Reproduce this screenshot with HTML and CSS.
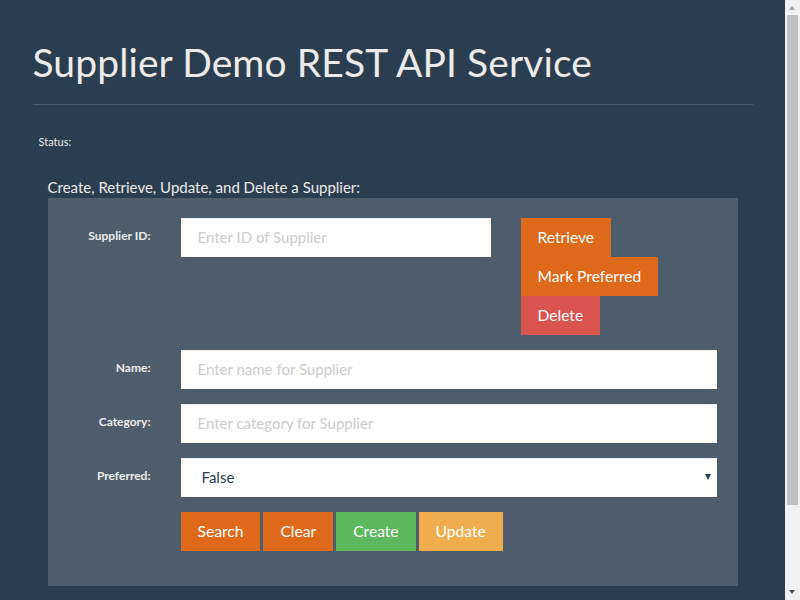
FILE: index.html
```html
<!DOCTYPE html>
<html lang="en">
<head>
<meta charset="utf-8">
<title>Supplier Demo REST API Service</title>
<link rel="stylesheet" href="styles.css">
</head>
<body>
<div class="container">
  <div class="page-header">
    <h1>Supplier Demo REST API Service</h1>
  </div>

  <div class="status">Status:</div>

  <section class="crud">
    <h3 class="crud-title">Create, Retrieve, Update, and Delete a Supplier:</h3>
    <div class="well">
      <div class="form-row form-row-top">
        <label class="control-label" for="supplier_id">Supplier ID:</label>
        <div class="id-group">
          <input class="form-control id-input" id="supplier_id" type="text" placeholder="Enter ID of Supplier">
          <div class="side-buttons">
            <button class="btn btn-primary">Retrieve</button>
            <button class="btn btn-primary">Mark Preferred</button>
            <button class="btn btn-danger">Delete</button>
          </div>
        </div>
      </div>

      <div class="form-row">
        <label class="control-label" for="supplier_name">Name:</label>
        <input class="form-control" id="supplier_name" type="text" placeholder="Enter name for Supplier">
      </div>

      <div class="form-row">
        <label class="control-label" for="supplier_category">Category:</label>
        <input class="form-control" id="supplier_category" type="text" placeholder="Enter category for Supplier">
      </div>

      <div class="form-row">
        <label class="control-label" for="supplier_preferred">Preferred:</label>
        <div class="select-wrap">
          <select class="form-control select" id="supplier_preferred">
            <option value="false" selected>False</option>
            <option value="true">True</option>
          </select>
        </div>
      </div>

      <div class="form-row form-row-actions">
        <span></span>
        <div class="actions">
          <button class="btn btn-primary">Search</button>
          <button class="btn btn-primary">Clear</button>
          <button class="btn btn-success">Create</button>
          <button class="btn btn-warning">Update</button>
        </div>
      </div>
    </div>
  </section>
</div>

<div class="scrollbar" aria-hidden="true">
  <span class="sb-arrow sb-up"></span>
  <span class="sb-thumb"></span>
  <span class="sb-arrow sb-down"></span>
</div>
</body>
</html>
```

FILE: styles.css
```css
html, body {
  margin: 0;
  padding: 0;
}

body {
  background: #2b3e50;
  color: #ebebeb;
  font-family: Lato, "Open Sans", "Liberation Sans", sans-serif;
  font-size: 15px;
  line-height: 1.42857;
  padding-right: 15px;
}

.container {
  width: 720px;
  margin: 0 auto;
  padding: 0 15px 112px;
}

.page-header {
  margin: 40px 0 20px;
  padding-bottom: 10px;
  border-bottom: 1px solid #4e5d6c;
}

.page-header h1 {
  margin: 0 0 10px;
  padding-top: 1px;
  font-size: 39px;
  font-weight: 400;
  line-height: 1.1;
  letter-spacing: 0.1px;
  color: #ebebeb;
}

.status {
  padding: 9px 0 0 6px;
  font-size: 11px;
  line-height: 16px;
  height: 27px;
}

.crud {
  padding: 0 15px;
  margin-top: 16px;
}

.crud-title {
  margin: 0 0 1px;
  font-size: 15px;
  font-weight: 400;
  line-height: 20px;
  color: #ebebeb;
}

.well {
  background: #4e5d6c;
  padding: 20px 21px 20px 20px;
}

.form-row {
  display: grid;
  grid-template-columns: 83px 1fr;
  column-gap: 30px;
  align-items: start;
  margin-bottom: 15px;
}

.control-label {
  text-align: right;
  font-size: 12px;
  font-weight: 700;
  line-height: 16px;
  padding-top: 10px;
  color: #ebebeb;
}

.form-control {
  display: block;
  box-sizing: border-box;
  width: 100%;
  height: 39px;
  margin: 0;
  padding: 8px 17px;
  border: 0;
  border-radius: 0;
  background: #ffffff;
  color: #2b3e50;
  font-family: inherit;
  font-size: 15px;
  line-height: 23px;
  box-shadow: inset 0 1px 1px rgba(0, 0, 0, 0.075);
  outline: none;
}

.form-control::placeholder {
  color: #cccccc;
  opacity: 1;
}

.id-group {
  display: grid;
  grid-template-columns: 310px 1fr;
  column-gap: 30px;
  align-items: start;
}

.side-buttons {
  display: flex;
  flex-direction: column;
  align-items: flex-start;
}

.select-wrap {
  position: relative;
}

.select-wrap::after {
  content: "";
  position: absolute;
  right: 6px;
  top: 16px;
  border-left: 3px solid transparent;
  border-right: 3px solid transparent;
  border-top: 6px solid #2b3e50;
  pointer-events: none;
}

.select {
  -webkit-appearance: none;
  appearance: none;
  padding-left: 21px;
}

.actions {
  display: flex;
  gap: 3px;
}

.btn {
  box-sizing: border-box;
  height: 39px;
  margin: 0;
  padding: 8px 17px;
  border: 0;
  border-radius: 0;
  color: #ffffff;
  font-family: inherit;
  font-size: 15.6px;
  line-height: 23px;
  cursor: pointer;
  white-space: nowrap;
}

.btn-primary { background: #df691a; }
.btn-success { background: #5cb85c; }
.btn-warning { background: #f0ad4e; }
.btn-danger  { background: #d9534f; }

/* simulated browser scrollbar, overlaying the right edge */
.scrollbar {
  position: fixed;
  top: 0;
  right: 0;
  width: 15px;
  height: 100%;
  background: #f1f1f1;
}

.sb-thumb {
  position: absolute;
  left: 2px;
  right: 2px;
  top: 15px;
  height: 490px;
  background: #c1c1c1;
}

.sb-arrow {
  position: absolute;
  left: 4px;
  border-left: 3.5px solid transparent;
  border-right: 3.5px solid transparent;
}

.sb-up {
  top: 6px;
  border-bottom: 4px solid #a3a3a3;
}

.sb-down {
  bottom: 6px;
  border-top: 4px solid #505050;
}
```
